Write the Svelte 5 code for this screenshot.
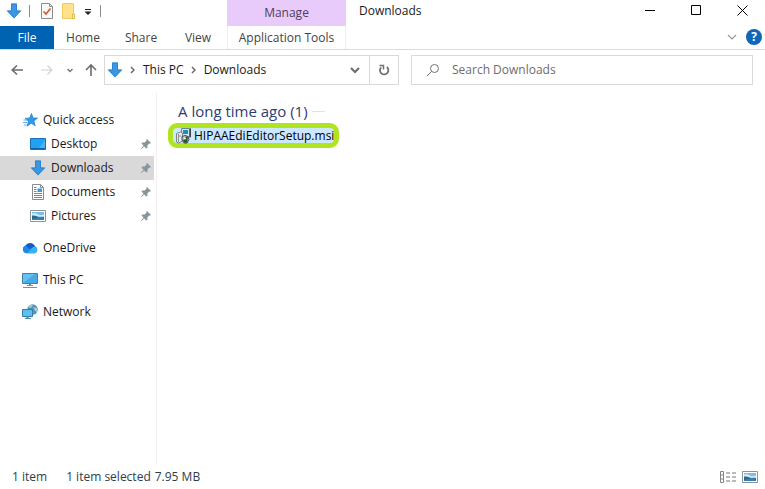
<script lang="ts">
	type Place = {
		name: string;
		icon: string;
		pinned?: boolean;
		top?: boolean;
	};

	let selected = $state('Downloads');
	let query = $state('');

	const tabs = ['Home', 'Share', 'View'];

	const places: Place[] = [
		{ name: 'Quick access', icon: 'star', top: true },
		{ name: 'Desktop', icon: 'desktop', pinned: true },
		{ name: 'Downloads', icon: 'download', pinned: true },
		{ name: 'Documents', icon: 'document', pinned: true },
		{ name: 'Pictures', icon: 'picture', pinned: true },
		{ name: 'OneDrive', icon: 'cloud', top: true },
		{ name: 'This PC', icon: 'pc', top: true },
		{ name: 'Network', icon: 'network', top: true }
	];
</script>

{#snippet icon(name: string)}
	<svg class="icon" viewBox="0 0 16 16" aria-hidden="true">
		{#if name === 'download'}
			<path d="M5 .5h6v7h4.500L8 15.500.5 7.500H5z" fill="#3b97e3" />
			<path d="M5.500 1v7H1.700L8 14.800 14.300 8h-3.800V1z" fill="none" stroke="#2b7fcb" stroke-width=".8" />
		{:else if name === 'star'}
			<path d="M9.500 1.500L11 6l4.600.1-3.700 2.800 1.300 4.900-3.900-2.600L5 14.200l1.500-5L3 6.400 7.600 6z" fill="#2f9be8" stroke="#1c7fcb" stroke-width=".7" />
			<path d="M1.500 8h4M1 10.500h4M2 13h2.500" stroke="#58b2ef" stroke-width="1" />
		{:else if name === 'desktop'}
			<path d="M.5 2.500h15v11H.5z" fill="#24a0f2" stroke="#1471b8" />
			<path d="M1 12.500h14" stroke="#0b67ad" />
			<path d="M9 12L15 4v8z" fill="#48b5fa" />
		{:else if name === 'document'}
			<path d="M2.500.5h8l3 3v12h-11z" fill="#fff" stroke="#858c92" />
			<path d="M10.500.5v3h3" fill="none" stroke="#858c92" />
			<path d="M4 3.500h2.500M4 5.500h2.500M4 7.500h2.500M4 9.500h8M4 11.500h8M4 13.500h8" stroke="#4a91c6" />
			<path d="M7.500 4.500h4.500v3.500H7.500z" fill="#3a9bdc" />
		{:else if name === 'picture'}
			<path d="M.5 2.500h15v11H.5z" fill="#fff" stroke="#8d9498" />
			<path d="M2 4h12v8H2z" fill="#79bdea" />
			<path d="M2 5.500q3-1.500 6 1 3 1 6 0v2H2z" fill="#d3e9f5" />
			<path d="M2 7.500q4-.5 7 2l5-.5v3H2z" fill="#286a8e" />
			<path d="M2 11q6-2 12-.5V12H2z" fill="#397fab" />
		{:else if name === 'cloud'}
			<path d="M4 13.200A3.900 3.900 0 0 1 3.200 5.800 5.400 5.400 0 0 1 12.900 6.300a3.700 3.700 0 0 1 0 6.900z" fill="#0e73db" />
			<path d="M3 6Q6 4 9 7l4 4-5 2H4A3.700 3.700 0 0 1 3 6z" fill="#2387e9" />
			<path d="M3.800 5.700A5.400 5.400 0 0 1 13 6.300Q10 7 8 9z" fill="#1a58c7" />
			<path d="M5.500 13.200L10 8q1.500-1.700 3-1.600a3.600 3.600 0 0 1 0 6.800z" fill="#35b4f3" />
		{:else if name === 'pc'}
			<path d="M.5 1.500h15v10H.5z" fill="#62c2f5" stroke="#487e9e" />
			<path d="M1 11L13 2h2v9z" fill="#48a9e4" />
			<path d="M7 12h2v1H7z" fill="#63859a" />
			<path d="M5 13.500h6M1 15.500h14" stroke="#6e92a5" />
		{:else if name === 'network'}
			<circle cx="10.500" cy="5.500" r="5.200" fill="#528eb1" />
			<path d="M6 3q2-3 5-2l-1 2-2 1zM11 3l4 1v4l-2-1zM9 7l3 1-2 2z" fill="#9cced9" />
			<path d="M.5 5.500h10v7H.5z" fill="#5abff3" stroke="#347ba6" />
			<path d="M5 13h1v1H5zM3 14.500h6" stroke="#5c8297" />
		{:else if name === 'installer'}
			<path d="M5.500.5h8v8h-8z" fill="#d6e7ee" stroke="#6d858f" />
			<path d="M7 2h5v4H7z" fill="#168ecb" />
			<path d="M13.500 1L15 0v9l-1.500 1z" fill="#38454a" />
			<path d="M.5 5.500l4-1.500 2 1v8l-4 2-2-1z" fill="#e6e9e8" stroke="#7b8587" />
			<path d="M2.500 6v8M3 8h2" stroke="#8c9496" />
			<path d="M6 8.500l3-1 3 1 1 3-2 3.500H8l-2-3z" fill="#b9c8c6" stroke="#3b4848" />
			<path d="M7 12.500l3-4 2 1-1 5-2 .5z" fill="#31552d" />
			<circle cx="9" cy="10.500" r="1" fill="#fff" />
		{/if}
	</svg>
{/snippet}

<div class="explorer">
	<header class="ribbon">
		<div class="ribbon-left">
			<div class="quick-bar">
				{@render icon('download')}
				<span class="sep"></span>
				<button type="button" class="tool" aria-label="Properties">
					<svg width="14" height="16" viewBox="0 0 14 16">
						<path d="M1.500.5h8l3 3v12h-11z" fill="#f7f8f8" stroke="#8c8c8c" />
						<path d="M9.500.5v3h3" fill="none" stroke="#8c8c8c" />
						<path d="M3.500 8.500L6 11l4.500-5.500" fill="none" stroke="#ce5d36" stroke-width="1.700" />
					</svg>
				</button>
				<button type="button" class="tool" aria-label="New folder">
					<svg width="14" height="16" viewBox="0 0 14 16">
						<path d="M.5.5h11v10l1 1v4H.5z" fill="#ffe28a" stroke="#edcc64" />
						<path d="M10.500 11h2v4.500h-2z" fill="#fff0b5" stroke="#e2bb4c" />
					</svg>
				</button>
				<button type="button" class="tool small" aria-label="Customize Quick Access Toolbar">
					<svg width="8" height="8" viewBox="0 0 8 8">
						<path d="M1 2.500h6" stroke="#222" />
						<path d="M.5 4.500h7L4 8z" fill="#222" />
					</svg>
				</button>
				<span class="sep last"></span>
			</div>
			<nav class="tabs" aria-label="Ribbon">
				<button type="button" class="tab file">File</button>
				{#each tabs as tab}
					<button type="button" class="tab">{tab}</button>
				{/each}
			</nav>
		</div>
		<div class="context">
			<div class="context-name">Manage</div>
			<button type="button" class="tab context-tab">Application Tools</button>
		</div>
		<div class="ribbon-right">
			<div class="title-bar">
				<span class="title">Downloads</span>
				<div class="window-buttons">
					<button type="button" aria-label="Minimize">
						<svg width="11" height="11" viewBox="0 0 11 11"><path d="M0 5.500h10" stroke="#000" /></svg>
					</button>
					<button type="button" aria-label="Maximize">
						<svg width="11" height="11" viewBox="0 0 11 11"><path d="M.5.5h9v9h-9z" fill="none" stroke="#000" /></svg>
					</button>
					<button type="button" aria-label="Close">
						<svg width="11" height="11" viewBox="0 0 11 11"><path d="M.5.5l10 10M10.500.5l-10 10" stroke="#000" /></svg>
					</button>
				</div>
			</div>
			<div class="help-bar">
				<button type="button" aria-label="Expand the ribbon">
					<svg width="10" height="6" viewBox="0 0 10 6"><path d="M1 1l4 4 4-4" fill="none" stroke="#999" stroke-width="1.200" /></svg>
				</button>
				<button type="button" class="help" aria-label="Help">?</button>
			</div>
		</div>
	</header>

	<div class="nav-bar">
		<div class="history">
			<button type="button" class="arrow" aria-label="Back">
				<svg width="12" height="12" viewBox="0 0 12 12"><path d="M12 6H1M6 1.500L1.200 6 6 10.500" fill="none" stroke="#6b6b6b" stroke-width="1.600" /></svg>
			</button>
			<button type="button" class="arrow" aria-label="Forward" disabled>
				<svg width="12" height="12" viewBox="0 0 12 12"><path d="M0 6h11M6.500 1.500L10.800 6l-4.300 4.500" fill="none" stroke="#d2d2d2" stroke-width="1.200" /></svg>
			</button>
			<button type="button" class="recent" aria-label="Recent locations">
				<svg width="6" height="5" viewBox="0 0 6 5"><path d="M.5 1L3 3.500 5.500 1" fill="none" stroke="#777" stroke-width="1.500" /></svg>
			</button>
			<button type="button" class="up" aria-label="Up">
				<svg width="12" height="12" viewBox="0 0 12 12"><path d="M6 12V1M1 6l5-5 5 5" fill="none" stroke="#6b6b6b" stroke-width="1.600" /></svg>
			</button>
		</div>
		<div class="address">
			{@render icon('download')}
			{#each ['This PC', 'Downloads'] as part}
				<svg class="crumb-arrow" width="5" height="8" viewBox="0 0 5 8"><path d="M1 1l3 3-3 3" fill="none" stroke="#6b6b6b" stroke-width="1.500" /></svg>
				<button type="button" class="crumb">{part}</button>
			{/each}
			<button type="button" class="previous" aria-label="Previous locations">
				<svg width="10" height="7" viewBox="0 0 10 7"><path d="M1 1l4 4 4-4" fill="none" stroke="#6b6b6b" stroke-width="2" /></svg>
			</button>
			<button type="button" class="refresh" aria-label="Refresh">
				<svg width="12" height="12" viewBox="0 0 12 12">
					<path d="M8.800 3A4.200 4.200 0 1 1 3.200 3.300" fill="none" stroke="#707070" stroke-width="1.800" />
					<path d="M1.500 1.500h4v4" fill="none" stroke="#707070" stroke-width="1.500" />
				</svg>
			</button>
		</div>
		<label class="search">
			<svg width="14" height="14" viewBox="0 0 14 14" aria-hidden="true">
				<circle cx="8.500" cy="5.500" r="4" fill="none" stroke="#707070" />
				<path d="M5.600 8.400L1 13" stroke="#707070" />
			</svg>
			<input type="text" placeholder="Search Downloads" aria-label="Search Downloads" bind:value={query} />
		</label>
	</div>

	<div class="body">
		<nav class="places" aria-label="Places">
			{#each places as place}
				<button
					type="button"
					class="place"
					class:top={place.top}
					class:selected={selected === place.name}
					onclick={() => (selected = place.name)}
				>
					{@render icon(place.icon)}
					<span class="place-name">{place.name}</span>
					{#if place.pinned}
						<svg class="pin" width="10" height="10" viewBox="0 0 10 10" aria-hidden="true">
							<path d="M6 0l4 4-1 .8-.8-.3L6.500 6.500 6.300 9l-1 .6L3.200 7.400.5 10 0 9.500 2.600 6.800.5 4.600l.8-1 2.300-.1 2-2-.4-.7z" fill="#8a949b" />
						</svg>
					{/if}
				</button>
			{/each}
		</nav>
		<main class="files">
			<h2>A long time ago (1)</h2>
			<button type="button" class="file-item">
				<span class="file-label">
					{@render icon('installer')}
					<span>HIPAAEdiEditorSetup.msi</span>
				</span>
			</button>
		</main>
	</div>

	<footer class="status">
		<span>1 item</span>
		<span class="status-selected">1 item selected</span>
		<span class="status-size">7.95 MB</span>
		<div class="views">
			<button type="button" aria-label="Details view">
				<svg width="16" height="12" viewBox="0 0 16 12">
					<path d="M.5.5h3v11h-3zM.5 4h3M.5 8h3" fill="none" stroke="#858585" />
					<path d="M6 2h4M12 2h4M6 6h4M12 6h4M6 10h4M12 10h4" stroke="#777" />
				</svg>
			</button>
			<button type="button" aria-label="Large thumbnails">{@render icon('picture')}</button>
		</div>
	</footer>
</div>

<style>
	:global(body) {
		margin: 0;
		background: #fff;
	}

	.explorer {
		display: flex;
		flex-direction: column;
		min-height: 100vh;
		font-family: 'Open Sans', 'Noto Sans', sans-serif;
		font-size: 12px;
		line-height: 16px;
		color: #1a1a1a;
	}

	button {
		display: flex;
		align-items: center;
		justify-content: center;
		flex-shrink: 0;
		margin: 0;
		padding: 0;
		border: none;
		background: none;
		font: inherit;
		color: inherit;
	}

	svg {
		display: block;
		flex-shrink: 0;
	}

	.icon {
		width: 16px;
		height: 16px;
	}

	.ribbon {
		display: flex;
		height: 49px;
		border-bottom: 1px solid #dadbdc;
	}

	.ribbon-left {
		width: 227px;
	}

	.quick-bar {
		display: flex;
		align-items: center;
		box-sizing: border-box;
		height: 26px;
		padding: 0 0 4px 6px;
	}

	.sep {
		width: 1px;
		height: 12px;
		margin: 0 10px 0 7px;
		background: #8c8c8c;
	}

	.sep.last {
		margin: 0 0 0 8px;
	}

	.tool {
		width: 14px;
		margin-right: 8px;
	}

	.tool.small {
		width: 8px;
		margin: 0;
	}

	.tabs {
		display: flex;
	}

	.tab {
		width: 58px;
		height: 24px;
		color: #444;
	}

	.tab:last-child {
		width: 56px;
	}

	.tab.file {
		width: 54px;
		height: 23px;
		background: #0063b1;
		color: #fff;
	}

	.context {
		width: 119px;
	}

	.context-name {
		height: 26px;
		background: #e9cbfb;
		color: #4f3d5c;
		line-height: 26px;
		text-align: center;
	}

	.tab.context-tab {
		box-sizing: border-box;
		width: 100%;
		height: 23px;
		border: 1px solid #eeeeee;
		border-width: 0 1px;
	}

	.ribbon-right {
		flex: 1;
	}

	.title-bar {
		display: flex;
		justify-content: space-between;
		height: 26px;
	}

	.title {
		padding: 3px 0 0 13px;
	}

	.window-buttons {
		display: flex;
	}

	.window-buttons button {
		width: 46px;
		height: 21px;
	}

	.help-bar {
		display: flex;
		justify-content: flex-end;
		align-items: center;
		gap: 9px;
		height: 22px;
		padding-right: 3px;
	}

	.help {
		width: 16px;
		height: 16px;
		border-radius: 50%;
		background: #0e67b7;
		color: #fff;
		font-weight: 700;
	}

	.nav-bar {
		display: flex;
		align-items: center;
		padding: 5px 12px 8px 0;
	}

	.history {
		display: flex;
		align-items: center;
		box-sizing: border-box;
		width: 104px;
		padding-left: 2px;
	}

	.arrow {
		width: 30px;
	}

	.recent {
		width: 16px;
	}

	.up {
		width: 26px;
	}

	.address,
	.search {
		display: flex;
		align-items: center;
		box-sizing: border-box;
		height: 30px;
		border: 1px solid #d9d9d9;
	}

	.address {
		flex: 291 1 0;
		margin-right: 12px;
		padding-left: 2px;
	}

	.crumb-arrow {
		margin: 0 8px 0 7px;
	}

	.previous {
		width: 28px;
		margin-left: auto;
	}

	.refresh {
		width: 29px;
		height: 28px;
		border-left: 1px solid #d9d9d9;
	}

	.search {
		flex: 326 1 0;
		gap: 12px;
		padding-left: 14px;
	}

	.search input {
		flex: 1;
		min-width: 0;
		padding: 0;
		border: none;
		outline: none;
		background: none;
		font: inherit;
		color: #1a1a1a;
	}

	.search input::placeholder {
		color: #6d6d6d;
		opacity: 1;
	}

	.body {
		display: flex;
		flex: 1;
	}

	.places {
		box-sizing: border-box;
		width: 157px;
		padding: 15px 2px 0 0;
		border-right: 1px solid #f0f0f0;
	}

	.place {
		justify-content: flex-start;
		gap: 5px;
		box-sizing: border-box;
		width: 100%;
		height: 24px;
		padding: 0 3px 0 30px;
	}

	.place.top {
		padding-left: 22px;
	}

	.place.top:not(:first-child) {
		margin-top: 8px;
	}

	.place.selected {
		background: #d9d9d9;
	}

	.pin {
		margin-left: auto;
	}

	.files {
		flex: 1;
		padding: 8px 11px;
	}

	h2 {
		display: flex;
		align-items: center;
		gap: 4px;
		margin: 0 0 2px 10px;
		font-size: 15px;
		font-weight: 400;
		line-height: 20px;
		color: #2b3d78;
	}

	h2::after {
		content: '';
		width: 13px;
		height: 1px;
		background: #dfe2e8;
	}

	.file-item {
		height: 25px;
		border: 5px solid #b0e421;
		border-radius: 9px;
		background: #cce8ff;
	}

	.file-label {
		display: flex;
		align-items: center;
		gap: 2px;
		padding: 0 0 0 3px;
		color: #000;
	}

	.status {
		display: flex;
		align-items: center;
		height: 24px;
		padding: 0 7px 0 12px;
		color: #2d3d4d;
	}

	.status-selected {
		margin-left: 19px;
	}

	.status-size {
		margin-left: 4px;
	}

	.views {
		display: flex;
		align-items: center;
		gap: 6px;
		margin-left: auto;
	}
</style>
